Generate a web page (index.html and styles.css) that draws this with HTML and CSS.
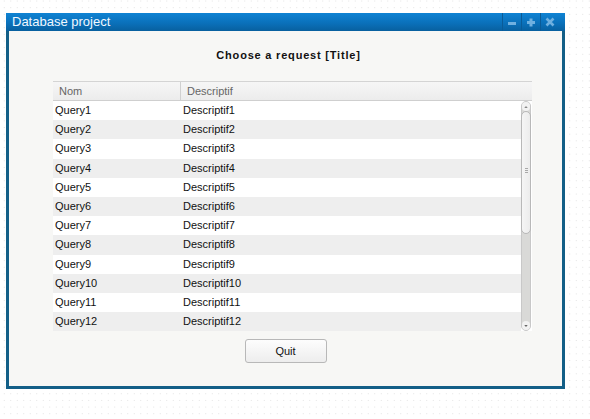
FILE: index.html
```html
<!DOCTYPE html>
<html>
<head>
<meta charset="utf-8">
<link rel="stylesheet" href="styles.css">
</head>
<body>
<div class="window">
  <div class="titlebar">
    <span class="wtitle">Database project</span>
    <div class="wbtns">
      <span class="wbtn"><svg width="18" height="18" viewBox="0 0 18 18"><rect x="5" y="9" width="8" height="3" fill="#6fb0e0"/></svg></span>
      <span class="wbtn"><svg width="18" height="18" viewBox="0 0 18 18"><rect x="5" y="8" width="8" height="3" fill="#6fb0e0"/><rect x="7.5" y="5.5" width="3" height="8" fill="#6fb0e0"/></svg></span>
      <span class="wbtn"><svg width="18" height="18" viewBox="0 0 18 18"><path d="M5.5 5.5 L12.5 12.5 M12.5 5.5 L5.5 12.5" stroke="#6fb0e0" stroke-width="2.6"/></svg></span>
    </div>
  </div>
  <div class="content">
    <div class="heading">Choose a request [Title]</div>
    <div class="table">
      <div class="thead">
        <div class="th c1">Nom</div>
        <div class="th c2">Descriptif</div>
      </div>
      <div class="tbody">
        <div class="rows">
          <div class="row"><span class="c1">Query1</span><span class="c2">Descriptif1</span></div>
          <div class="row alt"><span class="c1">Query2</span><span class="c2">Descriptif2</span></div>
          <div class="row"><span class="c1">Query3</span><span class="c2">Descriptif3</span></div>
          <div class="row alt"><span class="c1">Query4</span><span class="c2">Descriptif4</span></div>
          <div class="row"><span class="c1">Query5</span><span class="c2">Descriptif5</span></div>
          <div class="row alt"><span class="c1">Query6</span><span class="c2">Descriptif6</span></div>
          <div class="row"><span class="c1">Query7</span><span class="c2">Descriptif7</span></div>
          <div class="row alt"><span class="c1">Query8</span><span class="c2">Descriptif8</span></div>
          <div class="row"><span class="c1">Query9</span><span class="c2">Descriptif9</span></div>
          <div class="row alt"><span class="c1">Query10</span><span class="c2">Descriptif10</span></div>
          <div class="row"><span class="c1">Query11</span><span class="c2">Descriptif11</span></div>
          <div class="row alt"><span class="c1">Query12</span><span class="c2">Descriptif12</span></div>
        </div>
        <div class="scrollbar">
          <div class="sb-up"><svg width="9" height="6" viewBox="0 0 9 6"><path d="M2.5 4 L4.5 2 L6.5 4 Z" fill="#888"/></svg></div>
          <div class="sb-thumb"><span class="grip"></span></div>
          <div class="sb-track"></div>
          <div class="sb-down"><svg width="9" height="6" viewBox="0 0 9 6"><path d="M2.5 2 L4.5 4 L6.5 2 Z" fill="#666"/></svg></div>
        </div>
      </div>
    </div>
    <div class="actions">
      <button class="btn">Quit</button>
    </div>
  </div>
</div>
</body>
</html>
```
FILE: styles.css
```css
html, body {
  margin: 0;
  padding: 0;
}
body {
  width: 590px;
  height: 419px;
  background-color: #ffffff;
  background-image: radial-gradient(circle, #e0e0e0 0.7px, transparent 0.9px);
  background-size: 6.5px 6.67px;
  background-position: 1px -2.3px;
  font-family: "Liberation Sans", Arial, sans-serif;
  overflow: hidden;
  padding-top: 13px;
  box-sizing: border-box;
}
.window {
  margin-left: 6px;
  width: 559px;
  height: 376px;
  display: flex;
  flex-direction: column;
}
.titlebar {
  height: 18px;
  background: linear-gradient(#0f83d3, #0a6fb8 60%, #08609f);
  display: flex;
  align-items: center;
  justify-content: space-between;
  color: #fff;
  flex: none;
}
.wtitle {
  font-size: 13px;
  padding-left: 6px;
  line-height: 18px;
  color: #f2f8ff;
}
.wbtns {
  display: flex;
  height: 18px;
  margin-right: 6px;
  border-left: 1px solid #0a5b97;
}
.wbtn {
  width: 18px;
  height: 18px;
  border-right: 1px solid #0a5b97;
  display: flex;
}
.wbtn:last-child { border-right: none; }
.content {
  flex: 1;
  background: #f7f7f5;
  border: 3px solid #135f87;
  border-top: none;
  display: flex;
  flex-direction: column;
  padding: 16px 30px 0 44px;
}
.heading {
  font-weight: bold;
  font-size: 11px;
  letter-spacing: 0.8px;
  line-height: 16px;
  text-align: center;
  color: #111;
  margin-left: -8px;
  height: 16px;
}
.table {
  margin-top: 18px;
  width: 479px;
  background: #fff;
  font-size: 11px;
}
.thead {
  display: flex;
  height: 18px;
  border-top: 1px solid #d4d4d4;
  border-bottom: 1px solid #cfcfcf;
  background: linear-gradient(#f6f6f6, #ececec);
  color: #666;
}
.th {
  line-height: 18px;
}
.thead .c1 {
  width: 121px;
  padding-left: 6px;
  border-right: 1px solid #d0d0d0;
}
.thead .c2 {
  padding-left: 6px;
}
.tbody {
  display: flex;
  height: 230px;
  overflow: hidden;
}
.rows {
  flex: 1;
}
.row {
  display: flex;
  height: 19.2px;
  line-height: 18.4px;
  color: #111;
  background: #fff;
}
.row.alt {
  background: #eeeeee;
}
.row .c1 {
  width: 128px;
  padding-left: 2px;
}
.row .c2 {
  padding-left: 0;
}
.scrollbar {
  width: 10px;
  margin-right: 1px;
  display: flex;
  flex-direction: column;
  background: #d9d9d7;
  border: 1px solid #c8c8c8;
  border-radius: 5px;
  box-sizing: border-box;
}
.sb-up, .sb-down {
  height: 9px;
  display: flex;
  align-items: center;
  justify-content: center;
  background: #f2f2f2;
  border-radius: 5px;
}
.sb-up svg, .sb-down svg { width: 8px; }
.sb-thumb {
  height: 121px;
  background: linear-gradient(90deg, #f5f5f5, #ececec);
  border: 1px solid #b8b8b8;
  border-radius: 5px;
  margin: 0 -1px;
  position: relative;
}
.grip {
  position: absolute;
  left: 3px;
  top: 56px;
  width: 3px;
  height: 5px;
  background: repeating-linear-gradient(#a8a8a8 0 1px, transparent 1px 2px);
}
.sb-track {
  flex: 1;
}
.actions {
  display: flex;
  justify-content: center;
  margin-left: -44px;
  margin-right: -30px;
  margin-top: 8px;
}
.btn {
  width: 82px;
  height: 24px;
  font-family: "Liberation Sans", Arial, sans-serif;
  font-size: 11px;
  color: #111;
  background: linear-gradient(#fdfdfd, #ededed);
  border: 1px solid #b8b8b8;
  border-radius: 3px;
  padding: 0;
}
```
